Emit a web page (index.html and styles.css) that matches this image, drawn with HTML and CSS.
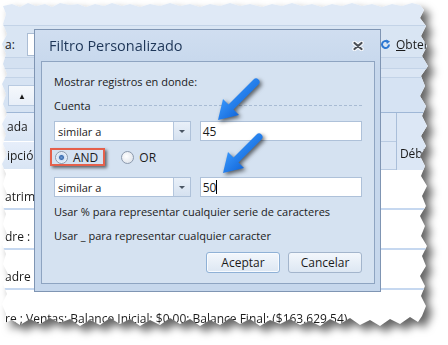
FILE: index.html
```html
<!DOCTYPE html>
<html lang="es">
<head>
    <meta charset="UTF-8">
    <title>Filtro Personalizado</title>
    <link rel="stylesheet" href="styles.css">
</head>
<body>

    <div class="paper">
        <div class="shot">
            <!-- ventana de fondo -->
            <div class="band1"></div>
            <div class="searchbar">
                <div class="left-part">
                    <span class="lbl">a:</span>
                    <span class="search"></span>
                </div>
                <div class="obter">
                    <svg width="11" height="11" viewBox="0 0 11 11">
                        <path d="M9 5.5 A3.5 3.5 0 1 1 7.5 2.6" fill="none" stroke="#2e78d2" stroke-width="2"/>
                        <path d="M6.2 0.4 L10 2.4 L6.8 5 Z" fill="#2e78d2"/>
                    </svg>
                    <span><u>O</u>bter</span>
                </div>
            </div>
            <div class="band2"></div>
            <div class="band3"></div>
            <div class="sortrow">
                <span class="sortbtn">&#9650;</span>
            </div>
            <div class="thead">
                <div class="th-left">
                    <div class="th-cell">ada</div>
                    <div class="th-cell">ipción</div>
                </div>
                <div class="th-right">
                    <div class="th-small"><div></div><div></div></div>
                    <div class="th-cell">Débit</div>
                </div>
            </div>
            <div class="trow"><span>atrim</span></div>
            <div class="trow"><span>dre :</span></div>
            <div class="trow"><span>adre :</span></div>
            <div class="footer">re ; Ventas: Balance Inicial: $0,00; Balance Final: ($163,629.54)</div>

            <!-- dialogo -->
            <div class="dialog">
                <div class="title">
                    <span>Filtro Personalizado</span>
                    <svg class="close" width="12" height="10" viewBox="0 0 12 10">
                        <path d="M2.5 2 L9.5 8 M9.5 2 L2.5 8" stroke="#f4f7fb" stroke-width="4.5" stroke-linecap="round"/>
                        <path d="M2.5 2 L9.5 8 M9.5 2 L2.5 8" stroke="#4a4f57" stroke-width="2.2" stroke-linecap="round"/>
                    </svg>
                </div>
                <div class="panel">
                    <div class="txt">Mostrar registros en donde:</div>
                    <div class="group"><span>Cuenta</span><span class="dash"></span></div>
                    <div class="fields">
                        <div class="combo"><span>similar a</span><span class="drop"><i></i></span></div>
                        <div class="input">45</div>
                    </div>
                    <div class="radios">
                        <label class="opt mark"><span class="radio checked"></span>AND</label>
                        <label class="opt"><span class="radio"></span>OR</label>
                    </div>
                    <div class="fields second">
                        <div class="combo"><span>similar a</span><span class="drop"><i></i></span></div>
                        <div class="input">50<span class="caret"></span></div>
                    </div>
                    <div class="txt hint">Usar % para representar cualquier serie de caracteres</div>
                    <div class="txt hint2">Usar _ para representar cualquier caracter</div>
                    <div class="buttons">
                        <span class="btn default">Aceptar</span>
                        <span class="btn">Cancelar</span>
                    </div>
                </div>
            </div>

            <!-- flechas -->
            <svg class="arrows" width="430" height="330" viewBox="0 0 430 330">
                <defs>
                    <linearGradient id="blue" x1="0" y1="0" x2="1" y2="1">
                        <stop offset="0" stop-color="#3b9bff"/>
                        <stop offset="1" stop-color="#0f62d6"/>
                    </linearGradient>
                </defs>
                <g class="arrow">
                    <line x1="256" y1="82" x2="229" y2="109" stroke="url(#blue)" stroke-width="7" stroke-linecap="round"/>
                    <polygon points="218,120 239,115 223,99" fill="url(#blue)"/>
                </g>
                <g class="arrow">
                    <line x1="259" y1="137" x2="234" y2="162" stroke="url(#blue)" stroke-width="7" stroke-linecap="round"/>
                    <polygon points="223,173 244,168 228,152" fill="url(#blue)"/>
                </g>
            </svg>
        </div>
    </div>

</body>
</html>
```

FILE: styles.css
```css
body {
    margin: 0;
    background: #fff;
    font-family: "Open Sans", "Noto Sans", sans-serif;
    font-size: 11px;
    color: #1b1b1b;
}
.paper {
    width: 440px;
    height: 345px;
    filter: drop-shadow(6px 6px 4px rgba(0, 0, 0, 0.6));
}
.shot {
    position: relative;
    width: 430px;
    height: 330px;
    background: #fff;
    overflow: hidden;
    clip-path: polygon(3px 6px, 12px 4px, 20px 7px, 28px 3px, 36px 6px, 45px 4px, 52px 7px, 60px 3px, 70px 5px, 78px 4px, 86px 7px, 95px 4px, 104px 6px, 112px 3px, 122px 6px, 130px 4px, 140px 7px, 150px 4px, 160px 6px, 170px 3px, 180px 6px, 190px 4px, 200px 7px, 210px 4px, 220px 6px, 230px 3px, 240px 6px, 250px 4px, 262px 7px, 272px 4px, 282px 6px, 292px 3px, 302px 6px, 312px 4px, 322px 7px, 332px 4px, 342px 6px, 352px 3px, 362px 6px, 372px 4px, 382px 7px, 392px 4px, 402px 6px, 412px 3px, 420px 5px,
        424px 10px, 420px 18px, 426px 26px, 421px 36px, 427px 46px, 422px 56px, 428px 66px, 421px 76px, 425px 86px, 420px 96px, 426px 106px, 422px 116px, 427px 126px, 421px 136px, 426px 146px, 420px 156px, 425px 166px, 421px 176px, 427px 186px, 422px 196px, 426px 206px, 420px 216px, 425px 226px, 421px 236px, 427px 246px, 422px 256px, 426px 266px, 420px 276px, 425px 286px, 421px 296px, 426px 306px, 422px 316px,
        418px 322px, 410px 317px, 400px 324px, 390px 319px, 380px 326px, 370px 320px, 360px 325px, 350px 318px, 340px 324px, 330px 319px, 320px 326px, 310px 321px, 300px 325px, 290px 319px, 280px 324px, 270px 320px, 260px 326px, 250px 319px, 240px 324px, 230px 318px, 220px 325px, 210px 320px, 200px 326px, 190px 319px, 180px 324px, 170px 318px, 160px 325px, 150px 320px, 140px 326px, 130px 319px, 120px 324px, 110px 318px, 100px 325px, 90px 320px, 80px 326px, 70px 319px, 60px 323px, 50px 318px, 40px 324px, 30px 319px, 20px 325px, 12px 320px, 4px 323px,
        6px 314px, 2px 304px, 7px 294px, 3px 284px, 8px 274px, 3px 264px, 6px 254px, 2px 244px, 7px 234px, 3px 224px, 6px 214px, 2px 204px, 7px 194px, 3px 184px, 6px 174px, 2px 164px, 7px 154px, 3px 144px, 6px 134px, 2px 124px, 7px 114px, 3px 104px, 6px 94px, 2px 84px, 7px 74px, 3px 64px, 6px 54px, 2px 44px, 7px 34px, 3px 24px, 6px 14px);
}

/* ventana de fondo */
.band1 {
    height: 25px;
    background: #dfe9f6;
    border-bottom: 1px solid #c3d3e7;
}
.searchbar {
    height: 31px;
    background: #d9e5f3;
    border-bottom: 1px solid #c3d3e7;
    display: flex;
    justify-content: space-between;
}
.left-part {
    display: flex;
    align-items: center;
    padding: 5px 0 0 5px;
}
.lbl {
    width: 22px;
    font-size: 12px;
}
.search {
    width: 20px;
    height: 21px;
    background: #fff;
    border: 1px solid #abbdd4;
}
.obter {
    display: flex;
    align-items: center;
    gap: 5px;
    width: 50px;
    padding-top: 6px;
    font-size: 12px;
}
.band2 {
    height: 10px;
    background: #d4e1f1;
    border-bottom: 1px solid #c3d3e7;
}
.band3 {
    height: 8px;
    background: #dbe6f4;
    border-bottom: 1px solid #c3d3e7;
}
.sortrow {
    height: 34px;
    background: #d6e3f3;
    display: flex;
    align-items: center;
}
.sortbtn {
    margin-left: 8px;
    width: 26px;
    height: 19px;
    background: linear-gradient(#f5f8fc, #e8eff8);
    border: 1px solid #b8cae1;
    font-size: 8px;
    display: flex;
    align-items: center;
    justify-content: center;
}
.thead {
    height: 57px;
    border-top: 1px solid #9fb7d6;
    display: flex;
    justify-content: space-between;
}
.th-left, .th-right {
    display: flex;
    flex-direction: column;
}
.th-left {
    width: 34px;
}
.th-left .th-cell {
    flex: 1;
    display: flex;
    align-items: center;
    padding-left: 7px;
    font-size: 12px;
    background: linear-gradient(#e6eefa, #d9e5f4);
    border-bottom: 1px solid #fff;
}
.th-right {
    width: 49px;
    flex-direction: row;
    background: #dce7f5;
}
.th-small {
    width: 15px;
    display: flex;
    flex-direction: column;
    border-right: 1px solid #a9bed9;
}
.th-small div {
    flex: 1;
    border-bottom: 1px solid #b9cbe2;
}
.th-right .th-cell {
    flex: 1;
    display: flex;
    align-items: center;
    padding-left: 3px;
    padding-top: 24px;
    font-size: 12px;
}
.trow {
    height: 38px;
    border-bottom: 2px solid #c6d8f0;
    display: flex;
    align-items: flex-end;
    padding-left: 5px;
    font-size: 12px;
}
.trow span {
    padding-bottom: 3px;
}
.footer {
    padding: 20px 0 0 5px;
    font-size: 12px;
    white-space: nowrap;
}

/* dialogo */
.dialog {
    position: absolute;
    left: 34px;
    top: 29px;
    width: 345px;
    height: 261px;
    background: linear-gradient(#d0def0, #c6d7ec 40px);
    border: 1px solid #7f95b3;
    display: flex;
    flex-direction: column;
}
.title {
    height: 31px;
    display: flex;
    align-items: center;
    justify-content: space-between;
    padding: 0 16px 0 14px;
    font-size: 14.5px;
    color: #1e3658;
}
.panel {
    flex: 1;
    margin: 0 5px 7px 6px;
    background: #d5e2f1;
    border: 1px solid #8ea4c1;
    padding: 12px 12px 0 12px;
}
.txt {
    height: 16px;
    line-height: 16px;
}
.group {
    margin-top: 7px;
    height: 16px;
    display: flex;
    align-items: center;
    gap: 8px;
}
.dash {
    flex: 1;
    border-top: 1px dashed #a8bbd3;
}
.fields {
    margin-top: 8px;
    height: 20px;
    display: flex;
    gap: 9px;
}
.fields.second {
    margin-top: 9px;
}
.combo {
    width: 133px;
    background: #fff;
    border: 1px solid #aec1d9;
    display: flex;
    justify-content: space-between;
    align-items: center;
    padding-left: 3px;
}
.drop {
    width: 16px;
    height: 18px;
    background: linear-gradient(#e9f0f9, #d5e1f0);
    border-left: 1px solid #b4c6dd;
    display: flex;
    align-items: center;
    justify-content: center;
}
.drop i {
    border-left: 3px solid transparent;
    border-right: 3px solid transparent;
    border-top: 3px solid #4a5563;
}
.input {
    width: 160px;
    background: #fff;
    border: 1px solid #aec1d9;
    display: flex;
    align-items: center;
    padding-left: 2px;
    font-size: 12px;
}
.caret {
    width: 1px;
    height: 14px;
    background: #000;
}
.radios {
    margin-top: 5px;
    height: 22px;
    display: flex;
    align-items: center;
    gap: 16px;
}
.opt {
    display: flex;
    align-items: center;
    gap: 5px;
    font-size: 12px;
}
.opt.mark {
    margin-left: -4px;
    height: 14px;
    padding: 0 5px 0 3px;
    border: 2px solid #e5604b;
    box-shadow: 2px 2px 3px rgba(0, 0, 0, 0.55);
}
.radio {
    width: 11px;
    height: 11px;
    border-radius: 50%;
    border: 1px solid #8c9aad;
    background: radial-gradient(circle at 40% 40%, #fff, #d7dde6);
}
.radio.checked {
    background: radial-gradient(circle, #6f9ad0 0, #3f6fb0 2px, #cfe0f4 3px, #f4f7fb 6px);
}
.hint {
    margin-top: 7px;
}
.hint2 {
    margin-top: 8px;
}
.buttons {
    margin-top: 8px;
    display: flex;
    justify-content: flex-end;
    gap: 8px;
}
.btn {
    width: 72px;
    height: 19px;
    border: 1px solid #a3b5cc;
    border-radius: 3px;
    background: linear-gradient(#f3f7fc, #dde7f3);
    display: flex;
    align-items: center;
    justify-content: center;
    font-size: 12px;
}
.btn.default {
    box-shadow: inset 0 0 0 1px #f8fbff;
    border-color: #8fb1d6;
}

.arrows {
    position: absolute;
    left: 0;
    top: 0;
}
.arrow {
    filter: drop-shadow(2px 2px 2px rgba(0, 0, 0, 0.6));
}
```
